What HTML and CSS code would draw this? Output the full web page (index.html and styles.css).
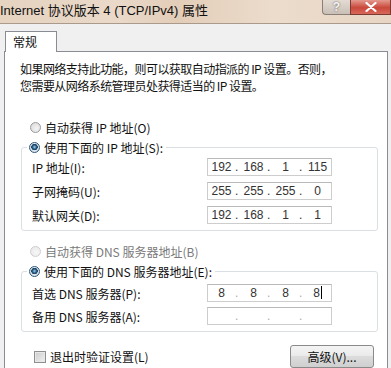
FILE: index.html
```html
<!DOCTYPE html>
<html lang="zh-CN">
<head>
    <meta charset="UTF-8">
    <title>Internet 协议版本 4 (TCP/IPv4) 属性</title>
    <link rel="stylesheet" href="styles.css">
</head>
<body>
    <div class="window">
        <!-- Title Bar -->
        <div class="titlebar">
            <span class="title">Internet 协议版本 4 (TCP/IPv4) 属性</span>
            <div class="caption-buttons">
                <div class="btn-help">?</div>
                <div class="btn-close">
                    <svg width="12" height="10" viewBox="0 0 12 10">
                        <path d="M1.5 1 L10.5 9 M10.5 1 L1.5 9" stroke="#fff" stroke-width="2.2" stroke-linecap="round"/>
                    </svg>
                </div>
            </div>
        </div>

        <!-- Tabs -->
        <div class="tabs">
            <div class="tab">常规</div>
        </div>

        <!-- Tab Panel -->
        <div class="panel">
            <p class="intro">如果网络支持此功能，则可以获取自动指派的 IP 设置。否则，<br>您需要从网络系统管理员处获得适当的 IP 设置。</p>

            <div class="option">
                <span class="radio"></span>
                <span>自动获得 IP 地址(O)</span>
            </div>

            <fieldset class="group group-ip">
                <legend class="option">
                    <span class="radio checked"></span>
                    <span>使用下面的 IP 地址(S):</span>
                </legend>
                <div class="field-row">
                    <span class="label">IP 地址(I):</span>
                    <div class="ip-field">
                        <span class="cell">192</span><span class="dot">.</span><span class="cell">168</span><span class="dot">.</span><span class="cell">1</span><span class="dot">.</span><span class="cell">115</span>
                    </div>
                </div>
                <div class="field-row">
                    <span class="label">子网掩码(U):</span>
                    <div class="ip-field">
                        <span class="cell">255</span><span class="dot">.</span><span class="cell">255</span><span class="dot">.</span><span class="cell">255</span><span class="dot">.</span><span class="cell">0</span>
                    </div>
                </div>
                <div class="field-row">
                    <span class="label">默认网关(D):</span>
                    <div class="ip-field">
                        <span class="cell">192</span><span class="dot">.</span><span class="cell">168</span><span class="dot">.</span><span class="cell">1</span><span class="dot">.</span><span class="cell">1</span>
                    </div>
                </div>
            </fieldset>

            <div class="option option-dns disabled">
                <span class="radio"></span>
                <span>自动获得 DNS 服务器地址(B)</span>
            </div>

            <fieldset class="group group-dns">
                <legend class="option">
                    <span class="radio checked"></span>
                    <span>使用下面的 DNS 服务器地址(E):</span>
                </legend>
                <div class="field-row">
                    <span class="label">首选 DNS 服务器(P):</span>
                    <div class="ip-field light">
                        <span class="cell">8</span><span class="dot">.</span><span class="cell">8</span><span class="dot">.</span><span class="cell">8</span><span class="dot">.</span><span class="cell">8<span class="caret"></span></span>
                    </div>
                </div>
                <div class="field-row">
                    <span class="label">备用 DNS 服务器(A):</span>
                    <div class="ip-field light">
                        <span class="cell"></span><span class="dot">.</span><span class="cell"></span><span class="dot">.</span><span class="cell"></span><span class="dot">.</span><span class="cell"></span>
                    </div>
                </div>
            </fieldset>

            <div class="footer">
                <div class="option">
                    <span class="checkbox"></span>
                    <span>退出时验证设置(L)</span>
                </div>
                <button class="btn-advanced">高级(V)...</button>
            </div>
        </div>
    </div>
</body>
</html>
```

FILE: styles.css
```css
/* General Reset */
* {
    box-sizing: border-box;
    margin: 0;
    padding: 0;
}

body {
    width: 391px;
    height: 368px;
    overflow: hidden;
    background: #f0f0f0;
    font-family: "Noto Sans CJK SC", "Liberation Sans", sans-serif;
    font-size: 12px;
    color: #111;
}

.window {
    display: flex;
    flex-direction: column;
    height: 368px;
}

/* Title Bar */
.titlebar {
    display: flex;
    justify-content: space-between;
    align-items: flex-start;
    height: 24px;
    background: linear-gradient(90deg, #e6d3c0 0%, #ead9c9 30%, #e2cdb8 45%, #ecdccc 70%, #e8d5c3 100%);
    border-bottom: 1px solid #a99a8c;
}

.title {
    font-family: "Liberation Sans", "Noto Sans CJK SC", sans-serif;
    font-size: 13px;
    line-height: 22px;
    color: #111;
}

.caption-buttons {
    display: flex;
}

.btn-help {
    width: 28px;
    height: 15px;
    border: 1px solid #8a7f76;
    border-top: none;
    border-right: none;
    border-radius: 0 0 0 4px;
    background: linear-gradient(#e4dcd4, #c9bfb6);
    color: #f6f3f0;
    font-family: "Liberation Sans", sans-serif;
    font-size: 12px;
    font-weight: bold;
    line-height: 14px;
    text-align: center;
    text-shadow: 0 0 2px #555;
}

.btn-close {
    width: 41px;
    height: 15px;
    display: flex;
    align-items: center;
    justify-content: center;
    border: 1px solid #7d3a32;
    border-top: none;
    background: linear-gradient(#e59a8f, #c9493b 55%, #d9685a);
}

/* Tabs */
.tabs {
    height: 27px;
    display: flex;
    align-items: flex-end;
    padding-left: 5px;
}

.tab {
    width: 52px;
    height: 21px;
    margin-bottom: -1px;
    background: #fff;
    border: 1px solid #898c95;
    border-bottom: none;
    padding-left: 7px;
    line-height: 19px;
    position: relative;
    z-index: 1;
}

/* Tab Panel */
.panel {
    flex-grow: 1;
    margin: 0 3px 0 4px;
    background: #fff;
    border: 1px solid #898c95;
    border-bottom: none;
}

.intro {
    padding: 8px 0 0 15px;
    line-height: 17px;
    letter-spacing: -0.55px;
}

/* Radio / Checkbox Options */
.option {
    display: flex;
    align-items: center;
    gap: 4px;
    height: 19px;
    padding-left: 25px;
}

.intro + .option {
    margin-top: 24px;
}

.option.disabled {
    color: #7a7a7a;
}

.option-dns {
    margin-top: 10px;
    height: 20px;
}

.radio {
    width: 11px;
    height: 11px;
    border-radius: 50%;
    border: 1px solid #9a9a9a;
    background: radial-gradient(circle at 60% 60%, #f4f4f4, #d6d6d6);
}

.disabled .radio {
    border-color: #cfcfcf;
    background: radial-gradient(circle at 60% 60%, #f7f7f7, #e6e6e6);
}

.radio.checked {
    border-color: #2f5778;
    background: radial-gradient(circle at 50% 45%, #9ed0ef 0, #2b5f88 28%, #1b3d5a 45%, #dfe9f1 52%, #c3d2de 100%);
}

.checkbox {
    width: 12px;
    height: 12px;
    border: 1px solid #8e8f8f;
    background: linear-gradient(135deg, #cbcbcb, #f1f1f1);
    box-shadow: inset 0 0 0 1px #e8e8e8;
}

/* Group Boxes */
.group {
    margin: 0 9px 0 16px;
    border: 1px solid #dadfe3;
    border-radius: 3px;
    padding: 1px 0 6px 10px;
}

.group legend.option {
    padding: 0 3px 0 2px;
    margin-left: -5px;
    height: 20px;
}

.group-dns {
    padding-top: 3px;
}

.group-dns .field-row + .field-row {
    margin-top: 5px;
}

.field-row {
    display: flex;
    align-items: center;
    height: 18px;
}

.field-row + .field-row {
    margin-top: 6px;
}

.label {
    width: 175px;
}

/* IP Address Fields */
.ip-field {
    width: 125px;
    height: 18px;
    display: flex;
    align-items: center;
    border: 1px solid #cdcdcd;
    border-top-color: #b9b9b9;
    font-family: "Liberation Sans", sans-serif;
    font-size: 12px;
    color: #333;
}

.cell {
    width: 27px;
    text-align: center;
}

.dot {
    width: 5px;
    text-align: left;
}

.ip-field.light .dot {
    color: #aaa;
}

.caret {
    display: inline-block;
    width: 1px;
    height: 13px;
    margin-left: 1px;
    vertical-align: -2px;
    background: #000;
}

/* Footer */
.footer {
    display: flex;
    justify-content: space-between;
    align-items: center;
    margin: 13px 13px 0 4px;
}

.footer .option {
    height: 20px;
}

.btn-advanced {
    width: 84px;
    height: 23px;
    border: 1px solid #8a8a8a;
    border-radius: 3px;
    background: linear-gradient(#f4f4f4 0%, #ebebeb 45%, #dcdcdc 50%, #cfcfcf 100%);
    font-family: "Noto Sans CJK SC", "Liberation Sans", sans-serif;
    font-size: 12px;
    color: #111;
}
```
